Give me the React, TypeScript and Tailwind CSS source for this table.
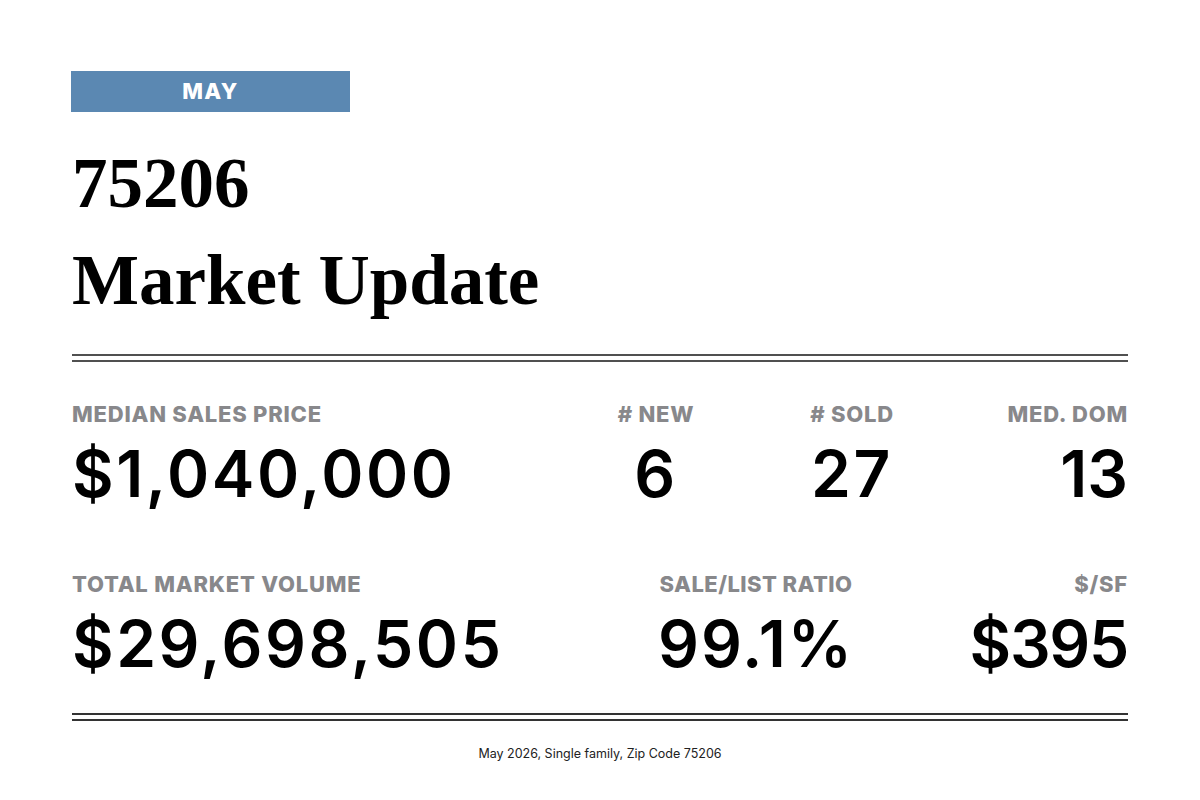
const sans = { fontFamily: "Inter, 'Liberation Sans', sans-serif" };
const serif = { fontFamily: "'Liberation Serif', 'DejaVu Serif', serif" };

function Label({ children, tracking = "tracking-[0.035em]" }: { children: React.ReactNode; tracking?: string }) {
  return (
    <div className={`text-[22px] leading-[22px] font-extrabold text-[#88888b] ${tracking}`}>
      {children}
    </div>
  );
}

function Value({ children, tracking = "tracking-[0.04em]" }: { children: React.ReactNode; tracking?: string }) {
  return (
    <div className={`mt-[17px] text-[64px] leading-[64px] font-semibold text-black ${tracking}`}>
      {children}
    </div>
  );
}

function DoubleRule({ className = "" }: { className?: string }) {
  return <div className={`h-[8px] border-y-2 ${className}`} />;
}

export default function App() {
  return (
    <div className="w-[1200px] h-[800px] bg-white px-[72px] pt-[71px]" style={sans}>
      {/* Month badge */}
      <div className="-ml-px w-[279px] h-[41px] bg-[#5b88b2] flex items-center justify-center">
        <span className="text-white text-[22px] font-extrabold tracking-[0.06em]">MAY</span>
      </div>

      {/* Title */}
      <h1 className="mt-[23px] text-[71px] leading-[97px] font-bold text-black" style={serif}>
        75206
        <br />
        Market Update
      </h1>

      <DoubleRule className="mt-[25px] border-[#505050]" />

      {/* Row 1 */}
      <div className="mt-[41px] grid grid-cols-[504px_160px_232px_1fr]">
        <div>
          <Label>MEDIAN SALES PRICE</Label>
          <Value>$1,040,000</Value>
        </div>
        <div className="text-center">
          <Label>#&nbsp;NEW</Label>
          <Value>6</Value>
        </div>
        <div className="text-center">
          <Label>#&nbsp;SOLD</Label>
          <Value>27</Value>
        </div>
        <div className="text-right">
          <Label>MED. DOM</Label>
          <Value tracking="tracking-normal">13</Value>
        </div>
      </div>

      {/* Row 2 */}
      <div className="mt-[67px] grid grid-cols-[564px_240px_1fr]">
        <div>
          <Label>TOTAL MARKET VOLUME</Label>
          <Value>$29,698,505</Value>
        </div>
        <div className="text-center">
          <Label tracking="tracking-[0.02em]">SALE/LIST RATIO</Label>
          <Value tracking="tracking-[0.03em]">99.1%</Value>
        </div>
        <div className="text-right">
          <Label>$/SF</Label>
          <Value tracking="tracking-[-0.02em]">$395</Value>
        </div>
      </div>

      <DoubleRule className="mt-[37px] border-[#333]" />

      <p className="mt-[25px] text-center text-[12.5px] leading-[16px] text-[#222]">
        May 2026, Single family, Zip Code 75206
      </p>
    </div>
  );
}
